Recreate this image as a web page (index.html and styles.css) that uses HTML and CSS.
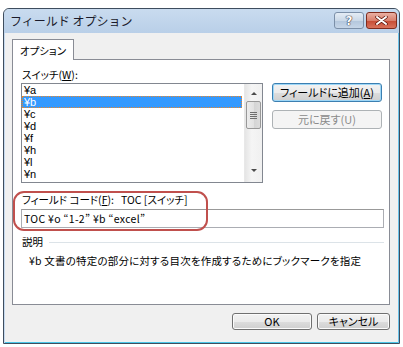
FILE: index.html
```html
<!DOCTYPE html>
<html lang="ja">
<head>
<meta charset="UTF-8">
<title>フィールド オプション</title>
<link rel="stylesheet" href="styles.css">
</head>
<body>

<div class="window">
  <div class="titlebar">
    <span class="title">フィールド オプション</span>
    <div class="caption-btns">
      <span class="cap help">?</span>
      <span class="cap close">
        <svg width="13" height="9" viewBox="0 0 13 9"><path d="M2 1 L11 8 M11 1 L2 8" stroke="#5a1208" stroke-width="3.4" stroke-linecap="round"/><path d="M2 1 L11 8 M11 1 L2 8" stroke="#fff" stroke-width="2" stroke-linecap="round"/></svg>
      </span>
    </div>
  </div>

  <div class="client">
    <div class="tabs"><span class="tab">オプション</span></div>

    <div class="pane">
      <div class="label">スイッチ(<u>W</u>):</div>

      <div class="switch-row">
        <div class="listbox">
          <ul class="items">
            <li>¥a</li>
            <li class="selected">¥b</li>
            <li>¥c</li>
            <li>¥d</li>
            <li>¥f</li>
            <li>¥h</li>
            <li>¥l</li>
            <li>¥n</li>
          </ul>
          <div class="scrollbar">
            <span class="arrow up"></span>
            <span class="thumb"><i></i><i></i><i></i><i></i></span>
            <span class="arrow down"></span>
          </div>
        </div>
        <div class="side-btns">
          <button class="btn default">フィールドに追加(<u>A</u>)</button>
          <button class="btn" disabled>元に戻す(U)</button>
        </div>
      </div>

      <div class="code-group">
        <div class="label">フィールド コード(<u>F</u>):&nbsp;&nbsp; TOC [スイッチ]</div>
        <div class="textbox">TOC ¥o “1-2” ¥b “excel”</div>
        <div class="annotation"></div>
      </div>

      <div class="desc-head"><span>説明</span><span class="rule"></span></div>
      <div class="desc">¥b 文書の特定の部分に対する目次を作成するためにブックマークを指定</div>
    </div>

    <div class="footer">
      <button class="btn ok">OK</button>
      <button class="btn cancel">キャンセル</button>
    </div>
  </div>
</div>

</body>
</html>
```

FILE: styles.css
```css
body {
  margin: 0;
  background: #fff;
  font-family: "Noto Sans CJK JP", "Liberation Sans", sans-serif;
  font-size: 10.5px;
  font-feature-settings: "palt";
  color: #000;
}

.window {
  margin: 8px 0 0 3px;
  width: 397px;
  height: 336px;
  box-sizing: border-box;
  border: 1px solid #3e4d5e;
  border-radius: 6px 6px 0 0;
  background: #f0f0f0;
  box-shadow: inset 1px 0 0 #c6daef, inset -1px 0 0 #6cc3ea, inset 0 -1px 0 #4cc6e8;
  overflow: hidden;
}

/* title bar */
.titlebar {
  height: 24px;
  display: flex;
  justify-content: space-between;
  align-items: flex-start;
  padding: 0 2px 0 6px;
  background: linear-gradient(#c9dbef, #b9cfe8);
  border-radius: 5px 5px 0 0;
}

.title {
  font-size: 12px;
  font-feature-settings: normal;
  line-height: 24px;
  color: #1a1a2a;
}

.caption-btns {
  display: flex;
  gap: 2px;
  padding-top: 3px;
}

.cap {
  height: 17px;
  box-sizing: border-box;
  border-radius: 3px;
  display: flex;
  align-items: center;
  justify-content: center;
}

.help {
  width: 30px;
  border: 1px solid #7b8fa8;
  background: linear-gradient(#e4ecf5 0%, #cbd9e8 50%, #b3c6dc 51%, #c6d6e8 100%);
  color: #fff;
  font-family: "DejaVu Sans", sans-serif;
  font-weight: bold;
  font-size: 12px;
  text-shadow: 0 0 1px #334, 0 0 1px #334, 0 0 1px #334;
}

.close {
  width: 31px;
  border: 1px solid #7e2b1d;
  background: linear-gradient(#eab0a3 0%, #d9806d 50%, #c54a33 51%, #d9735c 100%);
}

/* client area */
.client {
  padding: 6px 9px 0 8px;
}

.tabs {
  display: flex;
  margin-bottom: -1px;
}

.tab {
  position: relative;
  z-index: 1;
  width: 62px;
  height: 21px;
  box-sizing: border-box;
  border: 1px solid #898c95;
  border-bottom: none;
  background: #fff;
  text-align: center;
  line-height: 21px;
}

.pane {
  height: 246px;
  box-sizing: border-box;
  border: 1px solid #898c95;
  background: #fff;
  padding: 0 5px 0 8px;
}

.label {
  padding-left: 1px;
  line-height: 14px;
  height: 14px;
  white-space: nowrap;
}

.pane > .label {
  margin-top: 8px;
  margin-bottom: 1px;
}

/* switch list */
.switch-row {
  display: flex;
  gap: 9px;
}

.listbox {
  width: 242px;
  height: 100px;
  box-sizing: border-box;
  border: 1px solid #828790;
  display: flex;
}

.items {
  list-style: none;
  margin: 0;
  padding: 0;
  flex: 1;
  font-family: "Liberation Sans", "Noto Sans CJK JP", sans-serif;
  font-size: 11px;
}

.items li {
  height: 12px;
  line-height: 12px;
  padding-left: 2px;
  margin-right: 2px;
  overflow: hidden;
}

.items li.selected {
  background: #3399ff;
  color: #fff;
  outline: 1px dotted #e8862b;
  outline-offset: -1px;
}

.scrollbar {
  width: 17px;
  display: flex;
  flex-direction: column;
  align-items: center;
  background: linear-gradient(90deg, #e5e5e5, #f5f5f5 40%, #f0f0f0);
  border-left: 1px solid #e8e8e8;
}

.arrow {
  width: 0;
  height: 0;
  border-left: 3px solid transparent;
  border-right: 3px solid transparent;
}

.arrow.up {
  margin-top: 8px;
  border-bottom: 3px solid #4b4b4b;
}

.arrow.down {
  margin-top: auto;
  margin-bottom: 10px;
  border-top: 3px solid #4b4b4b;
}

.thumb {
  margin-top: 6px;
  width: 15px;
  height: 28px;
  box-sizing: border-box;
  border: 1px solid #989898;
  border-radius: 2px;
  background: linear-gradient(90deg, #ececec, #e2e2e2 50%, #d4d4d4 51%, #dcdcdc);
  display: flex;
  flex-direction: column;
  align-items: center;
  justify-content: center;
  gap: 1px;
}

.thumb i {
  width: 7px;
  height: 1px;
  background: #6e6e6e;
}

/* buttons */
.side-btns {
  display: flex;
  flex-direction: column;
  gap: 8px;
}

.btn {
  font: inherit;
  font-size: 11px;
  line-height: 15px;
  padding: 0;
  box-sizing: border-box;
  border: 1px solid #707070;
  border-radius: 3px;
  background: linear-gradient(#f2f2f2 0%, #ebebeb 50%, #dddddd 51%, #cfcfcf 100%);
  color: #000;
  box-shadow: inset 0 0 0 1px #fbfbfb;
}

.side-btns .btn {
  width: 110px;
  height: 19px;
}

.btn.default {
  border-color: #3c7fb1;
  box-shadow: inset 0 0 0 1px #9ed7f7;
}

.btn:disabled {
  border-color: #adb2b5;
  background: #f4f4f4;
  color: #8a8a8a;
  box-shadow: none;
}

/* field code */
.code-group {
  position: relative;
  margin-top: 10px;
}

.textbox {
  margin-top: 2px;
  height: 19px;
  box-sizing: border-box;
  border: 1px solid #abadb3;
  border-top-color: #999;
  padding-left: 2px;
  line-height: 17px;
  white-space: nowrap;
  letter-spacing: 0.3px;
}

.annotation {
  position: absolute;
  left: -8px;
  top: -2px;
  width: 195px;
  height: 40px;
  box-sizing: border-box;
  border: 2px solid #c0504d;
  border-radius: 11px;
}

/* description */
.desc-head {
  margin-top: 7px;
  display: flex;
  align-items: center;
  gap: 6px;
  padding-left: 1px;
  line-height: 14px;
}

.rule {
  flex: 1;
  height: 1px;
  background: #dce3e8;
}

.desc {
  margin-top: 5px;
  padding-left: 8px;
  line-height: 14px;
  white-space: nowrap;
  letter-spacing: 0.2px;
}

/* footer */
.footer {
  display: flex;
  justify-content: flex-end;
  gap: 5px;
  margin-top: 8px;
}

.footer .btn {
  height: 17px;
  line-height: 13px;
}

.btn.ok {
  width: 80px;
}

.btn.cancel {
  width: 73px;
}
```
